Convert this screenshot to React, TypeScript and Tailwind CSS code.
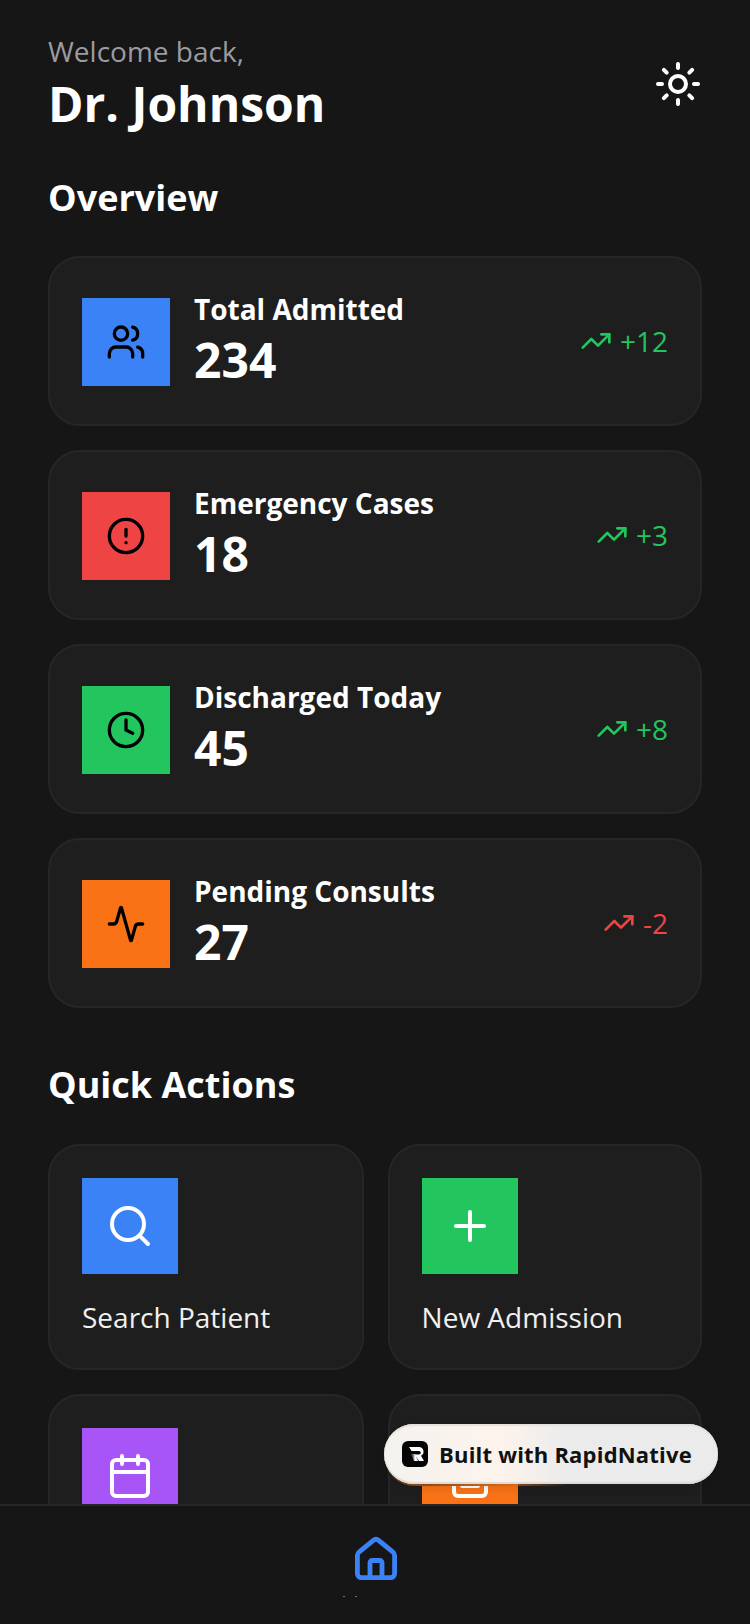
import { Sun, Users, CircleAlert, Clock, Activity, TrendingUp, Search, Plus, Calendar, FileText } from "lucide-react";

const stats = [
  { label: "Total Admitted", value: "234", delta: "+12", Icon: Users, tile: "bg-[#3b82f6]", tone: "text-[#22c55e]" },
  { label: "Emergency Cases", value: "18", delta: "+3", Icon: CircleAlert, tile: "bg-[#ef4444]", tone: "text-[#22c55e]" },
  { label: "Discharged Today", value: "45", delta: "+8", Icon: Clock, tile: "bg-[#22c55e]", tone: "text-[#22c55e]" },
  { label: "Pending Consults", value: "27", delta: "-2", Icon: Activity, tile: "bg-[#f97316]", tone: "text-[#ef4444]" },
];

const actions = [
  { label: "Search Patient", Icon: Search, tile: "bg-[#3b82f6]" },
  { label: "New Admission", Icon: Plus, tile: "bg-[#22c55e]" },
  { label: "", Icon: Calendar, tile: "bg-[#a855f7]" },
  { label: "", Icon: FileText, tile: "bg-[#f97316]" },
];

function HomeIcon() {
  return (
    <svg viewBox="0 0 48 48" fill="none" stroke="#3b82f6" strokeWidth={4.8} strokeLinejoin="round" strokeLinecap="round" className="ml-[2px] h-[48px] w-[48px]">
      <path d="M21.4 6.4a4 4 0 0 1 5.2 0L41 18.2a4 4 0 0 1 1.6 3.2v18.2a4 4 0 0 1-4 4H9.4a4 4 0 0 1-4-4V21.4a4 4 0 0 1 1.6-3.2Z" />
      <path d="M18 43V28.5a2 2 0 0 1 2-2h8a2 2 0 0 1 2 2V43" />
    </svg>
  );
}

function Logo() {
  return (
    <svg viewBox="0 0 26 26" className="h-[26px] w-[26px] shrink-0">
      <defs>
        <linearGradient id="logoFade" x1="0" y1="0" x2="1" y2="0">
          <stop offset="0.25" stopColor="#555555" />
          <stop offset="0.6" stopColor="#ffffff" />
        </linearGradient>
      </defs>
      <rect width="26" height="26" rx="6" fill="#050505" />
      <path d="M7 6h10a4.6 4.6 0 0 1 2 8.7L22 20h-5l-4.5-6.4H17a1.8 1.8 0 0 0 0-3.6H9.5Z" fill="#ffffff" />
      <path d="M9 13h4l3 7h-4Z" fill="url(#logoFade)" />
    </svg>
  );
}

export default function App() {
  return (
    <div className="relative flex h-[1624px] w-[750px] flex-col overflow-hidden bg-[#161616] font-['Open_Sans','Noto_Sans',sans-serif] text-white">
      <main className="min-h-0 flex-1 overflow-hidden px-[48px] pt-[31px]">
        <header className="flex items-center justify-between">
          <div>
            <p className="text-[28px] leading-[40px] text-[#9b9ba1]">Welcome back,</p>
            <h1 className="mt-[1px] text-[48px] leading-[64px] font-bold">Dr. Johnson</h1>
          </div>
          <Sun className="mt-[1px] h-[48px] w-[48px]" strokeWidth={2} />
        </header>

        <h2 className="mt-[36px] text-[36px] leading-[52px] font-bold">Overview</h2>

        <div className="mt-[32px] flex flex-col gap-[24px]">
          {stats.map(({ label, value, delta, Icon, tile, tone }) => (
            <div key={label} className="flex h-[170px] items-center justify-between rounded-[32px] border-2 border-[#262626] bg-[#1e1e1e] px-[32px]">
              <div className="flex items-center gap-[24px]">
                <div className={`mt-[2px] flex h-[88px] w-[88px] items-center justify-center ${tile}`}>
                  <Icon className="h-[40px] w-[40px] text-black" strokeWidth={2} />
                </div>
                <div className="mt-[-6px]">
                  <p className="text-[28px] leading-[40px] font-bold">{label}</p>
                  <p className="mt-[3px] text-[48px] leading-[56px] font-bold">{value}</p>
                </div>
              </div>
              <div className={`flex items-center gap-[8px] ${tone}`}>
                <TrendingUp className="h-[32px] w-[32px]" strokeWidth={2} />
                <span className="text-[28px] leading-[40px]">{delta}</span>
              </div>
            </div>
          ))}
        </div>

        <h2 className="mt-[51px] text-[36px] leading-[52px] font-bold">Quick Actions</h2>

        <div className="mt-[33px] grid grid-cols-[315.6px_314.4px] gap-[24px]">
          {actions.map(({ label, Icon, tile }, i) => (
            <div key={i} className="h-[226px] rounded-[32px] border-2 border-[#262626] bg-[#1e1e1e] p-[32px]">
              <div className={`flex h-[96px] w-[96px] items-center justify-center ${tile}`}>
                <Icon className="h-[48px] w-[48px] text-white" strokeWidth={2} />
              </div>
              {label && <p className="mt-[23px] text-[28px] leading-[40px] text-[#f0f0f0]">{label}</p>}
            </div>
          ))}
        </div>
      </main>

      <nav className="relative z-10 flex h-[120px] shrink-0 flex-col items-center border-t-2 border-[#262626] bg-[#161616] pt-[28px]">
        <HomeIcon />
        <div className="mt-[14px] ml-[343px] flex gap-[10px] self-start">
          <span className="h-[1px] w-[2px] bg-[#64748b]" />
          <span className="h-[1px] w-[2px] bg-[#64748b]" />
        </div>
      </nav>

      <div className="absolute left-[384px] top-[1424px] z-20 h-[62px] w-[334px] rounded-full bg-[linear-gradient(90deg,#6b3a12,#c2621a_30%,transparent_55%)] shadow-[0_2px_10px_rgba(0,0,0,0.12)]">
        <div className="flex h-[60px] items-center gap-[11px] rounded-full bg-[linear-gradient(90deg,#f4f2ef,#fdf3ec_35%,#ebebeb_55%,#ebebeb)] pl-[18px] shadow-[inset_0_-2px_1px_#dedbd7,inset_0_2px_1px_#e4e1dd]">
          <Logo />
          <span className="text-[22px] leading-[30px] font-bold tracking-[0.2px] text-[#111111]">Built with RapidNative</span>
        </div>
      </div>
    </div>
  );
}
